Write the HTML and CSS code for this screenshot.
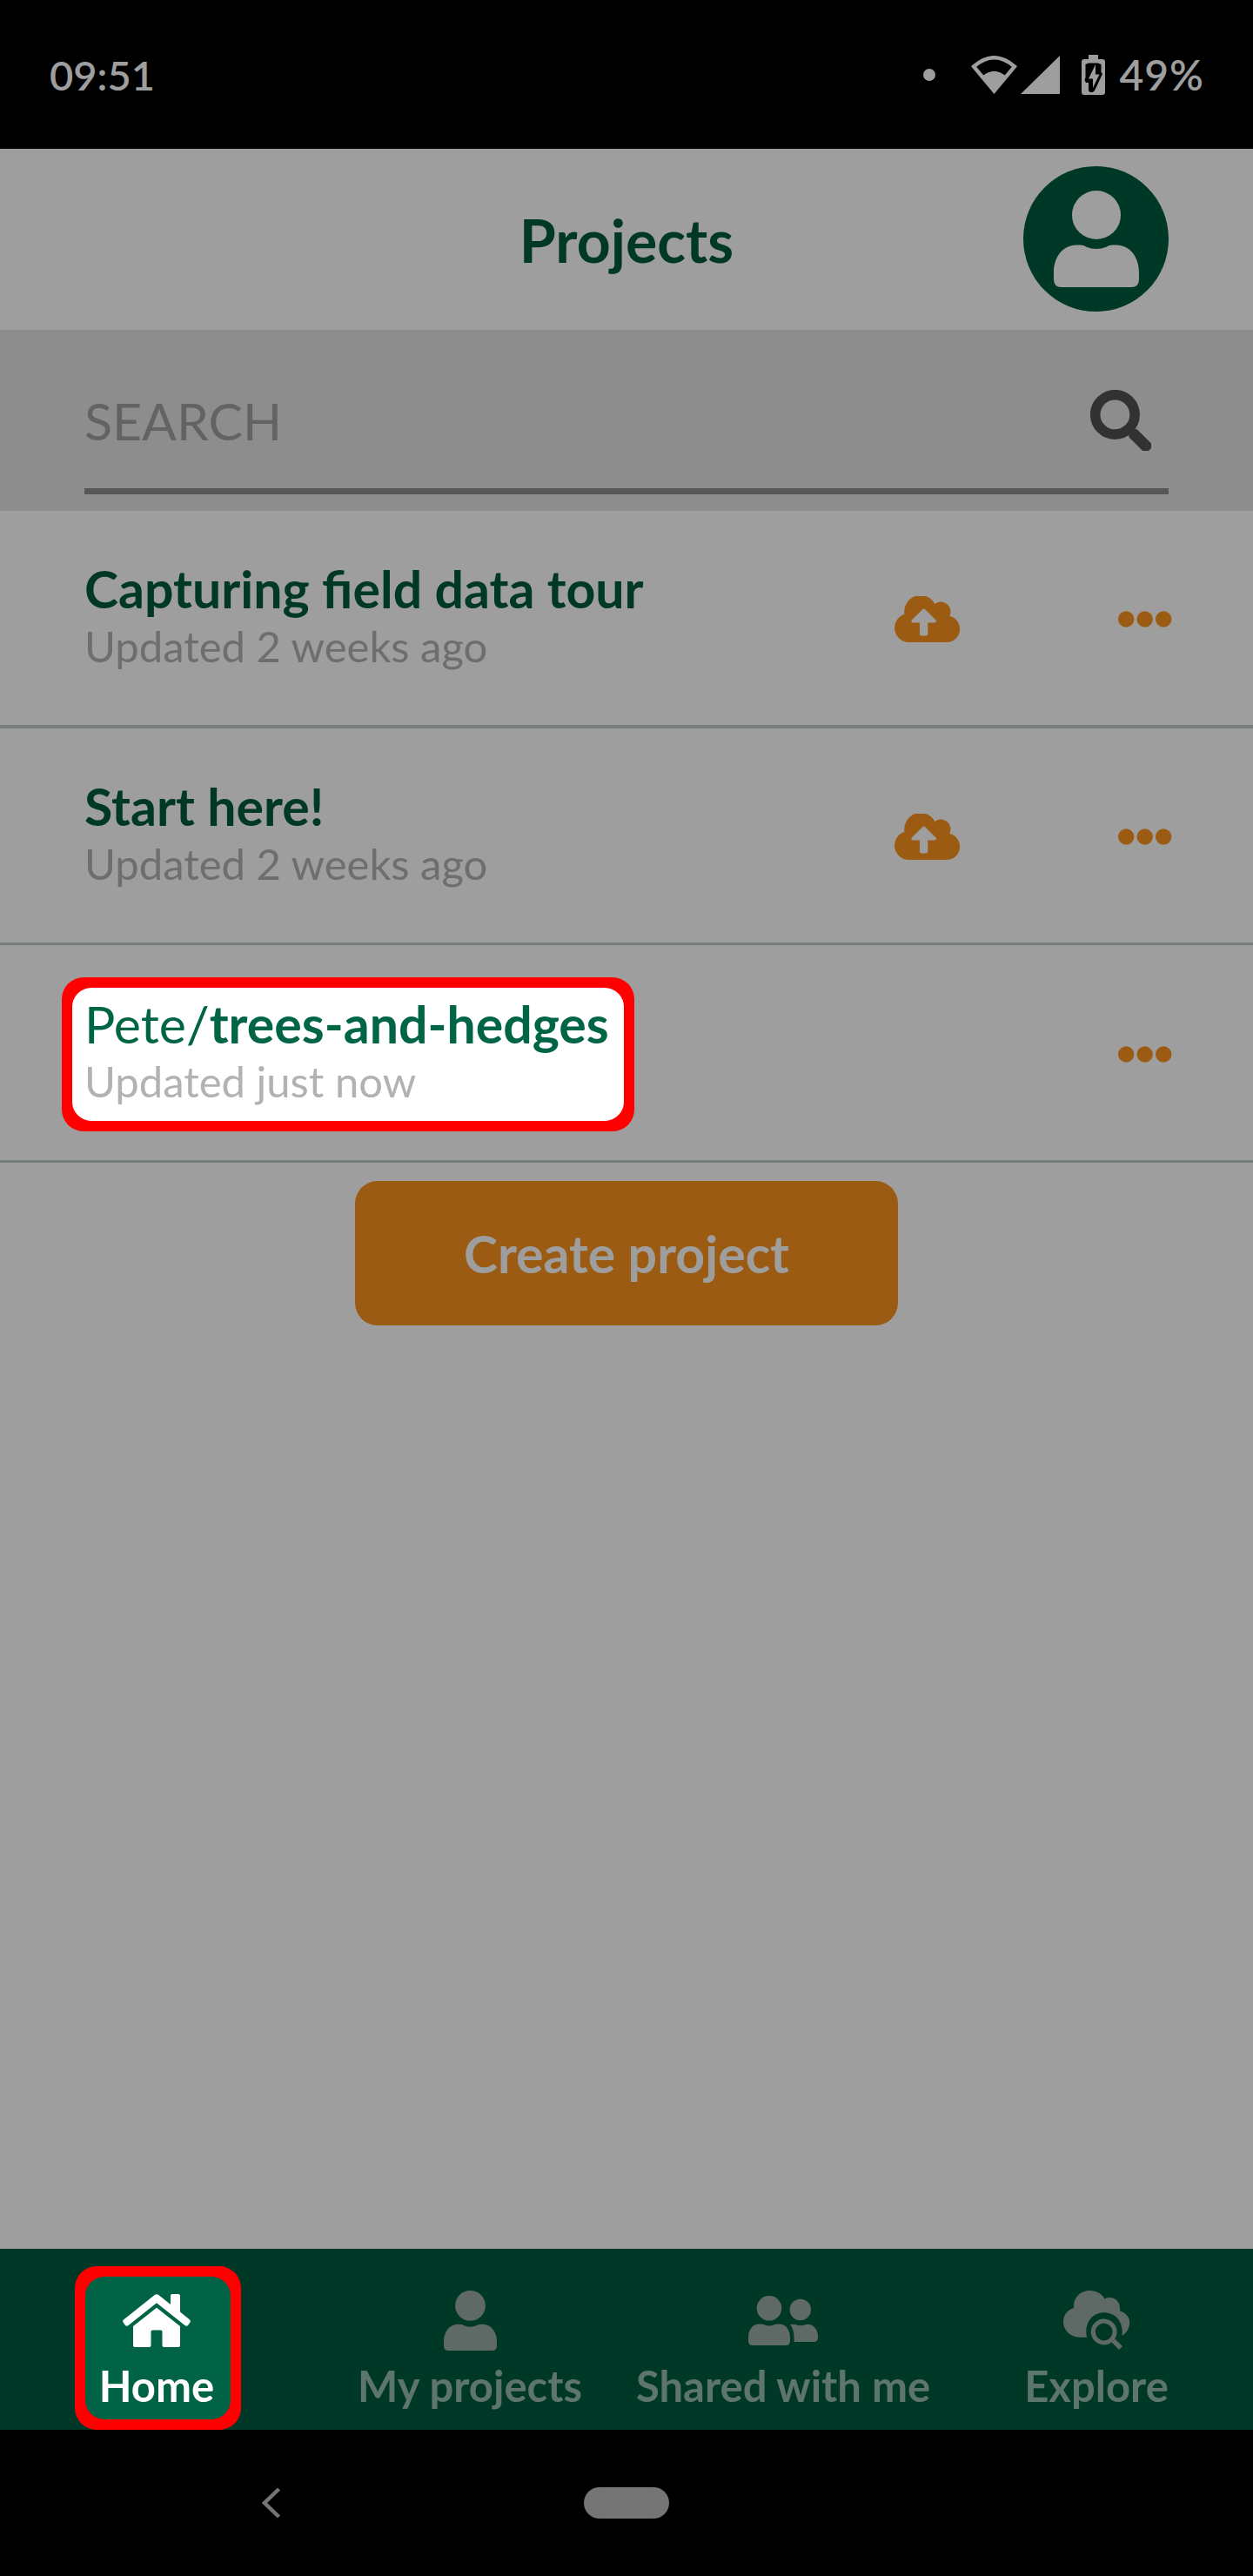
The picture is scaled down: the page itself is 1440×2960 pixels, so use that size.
FILE: index.html
```
<!DOCTYPE html>
<html lang="en">
<head>
<meta charset="utf-8">
<title>Projects</title>
<link rel="stylesheet" href="styles.css">
</head>
<body>
<svg class="defs" width="0" height="0" aria-hidden="true">
  <symbol id="person" viewBox="0 0 98 111">
    <circle cx="49" cy="28" r="28"/>
    <path d="M0 94C0 76 11 62 27 62.500C31 62.500 34 62.500 37 64.500Q49 69.500 61 64.500C64 62.500 67 62.500 71 62.500C87 62 98 76 98 94V102Q98 111 89 111H9Q0 111 0 102Z"/>
  </symbol>
  <symbol id="upload" viewBox="0 0 75 53">
    <path fill-rule="evenodd" d="M16.500 53A16.500 16.500 0 0 1 11.500 20.800A18.600 18.600 0 0 1 46.300 9A11.200 11.200 0 0 1 63.300 22.800A15.300 15.300 0 0 1 59.700 53ZM32.500 15L19.800 27.500Q18.500 30.500 21 30.500H29V43.500Q29 45.500 31 45.500H36.500Q38.300 45.500 38.300 43.500V30.500H46Q48.800 30 47.500 27.500L35 15Q33.700 14 32.500 15Z"/>
  </symbol>
  <symbol id="dots" viewBox="0 0 62 19">
    <circle cx="9.200" cy="9.500" r="9.200"/><circle cx="30.700" cy="9.500" r="9.200"/><circle cx="52.200" cy="9.500" r="9.200"/>
  </symbol>
</svg>

<div class="phone">
  <div class="status">
    <span class="clock">09:51</span>
    <div class="status-icons">
      <span class="notice"></span>
      <svg class="wifi" width="53" height="44" viewBox="0 0 53 44">
        <path d="M3 12.500Q26.500 -8 50 12.500L26.500 40.500Z" fill="none" stroke="#9e9e9e" stroke-width="4.400"/>
        <path d="M12 24.500Q26.500 11 41 24.500L26.500 43Z" fill="#9e9e9e"/>
      </svg>
      <svg class="signal" width="45" height="44" viewBox="0 0 45 44"><path d="M0 44L45 0V44Z" fill="#9e9e9e"/></svg>
      <svg class="battery" width="27" height="46" viewBox="0 0 27 46">
        <path d="M8 0H19V5H24Q27 5 27 8V43Q27 46 24 46H3Q0 46 0 43V8Q0 5 3 5H8Z" fill="#9e9e9e"/>
        <path d="M4.500 11L8 9.500H19L22.500 11V20L24 22L15 41L13 43H9.500L8 41V32H5L3.500 29L4.500 26Z" fill="#000"/>
        <path d="M16 11L8 27.500H13V38L20.500 22.500H16Z" fill="#9e9e9e"/>
      </svg>
      <span class="percent">49%</span>
    </div>
  </div>

  <header class="header">
    <h1>Projects</h1>
    <div class="avatar"><svg width="98" height="111"><use href="#person"/></svg></div>
  </header>

  <div class="search">
    <div class="field">
      <span class="placeholder">SEARCH</span>
      <svg width="70" height="70" viewBox="0 0 70 70">
        <circle cx="28.400" cy="28.400" r="22.700" fill="none" stroke="#323232" stroke-width="11.600"/>
        <rect x="44" y="51.500" width="29" height="13" rx="3.500" fill="#323232" transform="rotate(45 57.500 57.500)"/>
      </svg>
    </div>
  </div>

  <ul class="projects">
    <li class="project">
      <div class="info"><div class="name">Capturing field data tour</div><div class="time">Updated 2 weeks ago</div></div>
      <svg class="cloud" width="75" height="53"><use href="#upload"/></svg>
      <svg class="more" width="62" height="19"><use href="#dots"/></svg>
    </li>
    <li class="project">
      <div class="info"><div class="name">Start here!</div><div class="time">Updated 2 weeks ago</div></div>
      <svg class="cloud" width="75" height="53"><use href="#upload"/></svg>
      <svg class="more" width="62" height="19"><use href="#dots"/></svg>
    </li>
    <li class="project active">
      <div class="spotlight spotlight-row"></div>
      <div class="info"><div class="name"><span class="owner">Pete/</span>trees-and-hedges</div><div class="time">Updated just now</div></div>
      <svg class="more" width="62" height="19"><use href="#dots"/></svg>
    </li>
  </ul>

  <main class="content"><button class="create">Create project</button></main>

  <nav class="tabs">
    <a class="tab current">
      <div class="spotlight spotlight-tab"></div>
      <span class="glyph"><svg class="home" width="78" height="61" viewBox="0 0 78 61">
        <path d="M1 29.500L36.500 1.200Q39 -.8 41.500 1.200L55 12V2Q55 0 57 0H64Q66 0 66 2V20.500L77 29.500Q78.500 31 77.500 32.500L75 36Q73.500 37.500 71.500 36L39 10.300L6.500 36Q4.500 37.500 3 36L.6 32.500Q-.5 31 1 29.500Z"/>
        <path d="M39 15.700L66 37V59Q66 61 64 61H47.500Q45.500 61 45.500 59V43.500Q45.500 41.500 43.500 41.500H34.500Q32.500 41.500 32.500 43.500V59Q32.500 61 30.500 61H14Q12 61 12 59V37Z"/>
      </svg></span>
      <span class="label">Home</span>
    </a>
    <a class="tab">
      <span class="glyph"><svg width="61" height="69"><use href="#person"/></svg></span>
      <span class="label">My projects</span>
    </a>
    <a class="tab">
      <span class="glyph"><svg class="people" width="80" height="57" viewBox="0 0 80 57">
        <circle cx="24" cy="14.300" r="14.300"/>
        <path d="M0 48C0 39 5 32.500 12 32.500H15Q17 32.500 19 33.500Q24 35.500 29 33.500Q31 32.500 33 32.500H36C43 32.500 48 39 48 48V52Q48 57 43 57H5Q0 57 0 52Z"/>
        <circle cx="59.800" cy="16" r="12.200"/>
        <path d="M48 33Q50 32.300 54 33Q60 35.500 66 33Q68 32.500 70 32.700C76 34 80 40 80 46V48Q80 53 75 53H52.500C53 45 52 38 48 33Z"/>
      </svg></span>
      <span class="label">Shared with me</span>
    </a>
    <a class="tab">
      <span class="glyph"><svg width="77" height="69" viewBox="0 0 77 69">
        <path d="M19 53.700C8 53.700 0 45.500 0 36C0 28 5 22 12 20C11 9 19 0 30.500 0C38 0 44 3.500 47.500 9.500C56 5 66.500 11 65 23.500C77 26 81.500 42 67.500 52C69.500 37 61 25.300 46.700 25.300C33 25.300 23.500 38 27 53.700Z"/>
        <circle cx="46.700" cy="47.500" r="12.400" fill="none" stroke="#5f6966" stroke-width="5"/>
        <path d="M57.500 57.500L66 66" fill="none" stroke="#5f6966" stroke-width="5.500"/>
      </svg></span>
      <span class="label">Explore</span>
    </a>
  </nav>

  <div class="system">
    <svg class="back" width="22" height="36" viewBox="0 0 22 36"><path d="M19.500 2L3 18L19.500 34" fill="none" stroke="#757575" stroke-width="4.500"/></svg>
    <span class="pill"></span>
    <span></span>
  </div>
</div>
</body>
</html>
```
FILE: styles.css
```
* { box-sizing: border-box; }
body { margin: 0; background: #9e9e9e; font-family: Lato, "Liberation Sans", sans-serif; }
.defs { position: absolute; }
svg { display: block; flex: none; }

.phone { width: 1440px; height: 2960px; display: flex; flex-direction: column; overflow: hidden; }

.status { height: 171px; flex: none; background: #000; color: #9e9e9e; display: flex; justify-content: space-between; padding: 0 57px 0 57px; font-size: 47px; font-weight: 600; line-height: 172px; }
.status-icons { display: flex; align-items: center; }
.notice { width: 14px; height: 14px; border-radius: 50%; background: #9e9e9e; margin-right: 41px; }
.signal { margin: 0 25px 0 4px; }
.battery { margin-right: 16px; }
.percent { font-size: 48px; letter-spacing: 1px; margin-right: -1px; }

.header { height: 208px; flex: none; display: grid; grid-template-columns: 1fr auto 1fr; align-items: center; padding: 0 97px; color: #003828; }
.header h1 { grid-column: 2; margin: 2px 0 0; font-size: 68px; line-height: 82px; font-weight: 700; }
.avatar { justify-self: end; width: 167px; height: 167px; margin-bottom: 1px; border-radius: 50%; background: #003828; fill: #9e9e9e; display: flex; align-items: center; justify-content: center; }

.search { height: 208px; flex: none; background: #8d8d8d; padding: 0 97px 19px; display: flex; }
.field { flex: 1; display: flex; justify-content: space-between; align-items: center; padding: 26px 20px 0 0; border-bottom: 7px solid #575757; color: #636363; font-size: 59px; line-height: 70px; }
.placeholder { padding-top: 2px; }

.projects { flex: none; list-style: none; margin: 0; padding: 0; }
.project { height: 249.670px; position: relative; display: flex; align-items: center; padding: 0 93px 0 97px; border-bottom: 3px solid #777d79; }
.project:first-child { border-bottom-width: 4px; }
.info { flex: 1; position: relative; margin-bottom: 4px; }
.name { font-size: 59px; line-height: 68px; font-weight: 700; color: #003828; }
.time { font-size: 49px; line-height: 62px; color: #6e6e6e; }
.owner { font-weight: 400; }
.active .name { color: #006547; }
.active .time { color: #b2b2b2; }
.cloud, .more { fill: #9c5b12; margin-top: 4px; }
.cloud { margin-right: 182px; }

.content { flex: 1; display: flex; justify-content: center; align-items: flex-start; padding-top: 21px; }
.create { width: 624px; height: 166px; padding: 2px 0 0; border: 0; border-radius: 26px; background: #9c5b12; color: #9e9e9e; font: 700 59px/70px Lato, "Liberation Sans", sans-serif; }

.tabs { height: 208px; flex: none; display: grid; grid-template-columns: repeat(4, 1fr); background: #003828; fill: #5f6966; color: #5e756d; }
.tab { position: relative; display: flex; flex-direction: column; align-items: center; padding-top: 48px; font-size: 49px; font-weight: 700; line-height: 60px; }
.glyph, .label { position: relative; }
.glyph { height: 79px; }
.current { fill: #fff; color: #fff; }
.home { margin-top: 4px; }
.people { margin-top: 6px; }

.spotlight { position: absolute; border-radius: 25px; background: #f00; }
.spotlight::after { content: ""; position: absolute; inset: 12px; border-radius: 22px; background: #fff; }
.spotlight-row { left: 71px; top: 37px; width: 658px; height: 177px; }
.spotlight-tab { left: 86px; top: 20px; width: 191px; height: 188px; }
.spotlight-tab::after { background: #006345; }

.system { height: 168px; flex: none; background: #000; display: grid; grid-template-columns: 1fr 98px 1fr; align-items: center; }
.back { margin-left: 301px; }
.pill { height: 36px; border-radius: 18px; background: #757575; }
```
